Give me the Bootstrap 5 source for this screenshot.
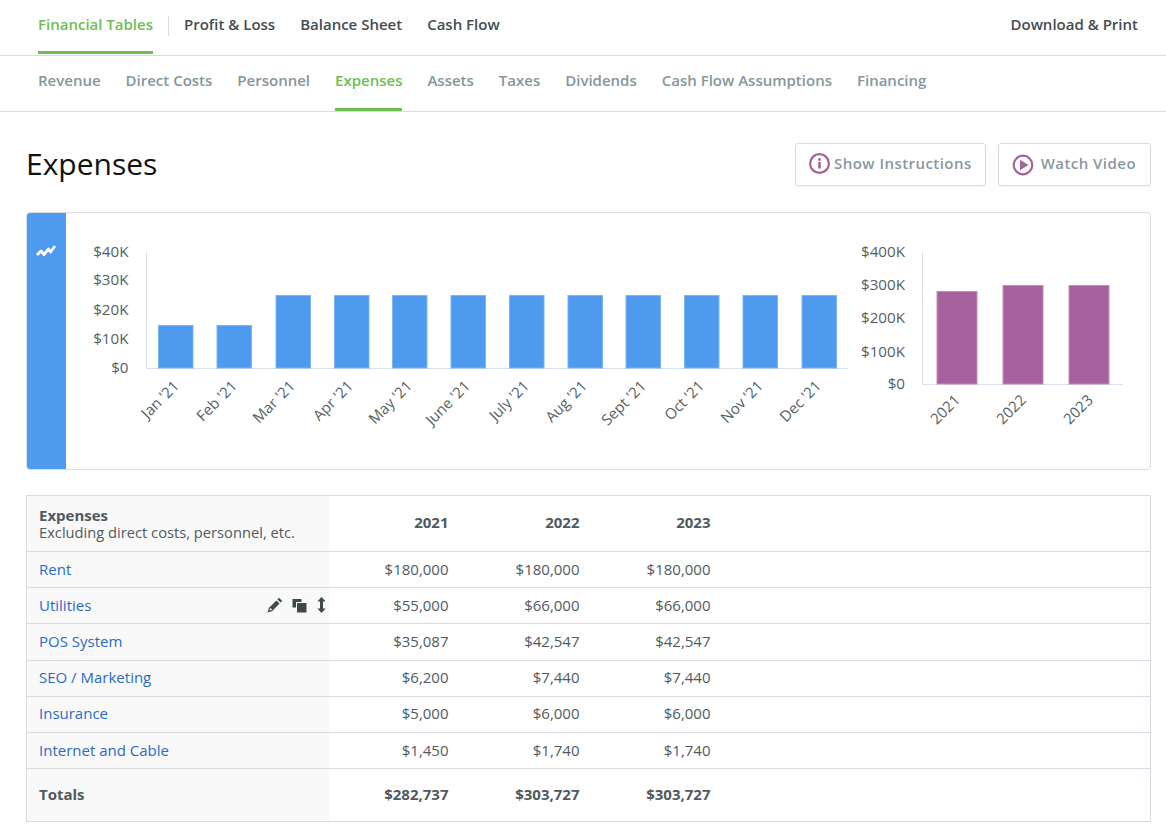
<!DOCTYPE html>
<html lang="en">
<head>
<meta charset="utf-8">
<title>Expenses</title>
<link href="https://cdn.jsdelivr.net/npm/bootstrap@5.3.0/dist/css/bootstrap.min.css" rel="stylesheet">
<style>
body{font-family:"Open Sans",sans-serif;font-size:15px;color:#505a5e;background:#fff}
.topbar{height:56px;border-bottom:1px solid #d9dcdf;padding:0 28px 0 38px}
.subbar{height:56px;border-bottom:1px solid #d9dcdf;padding:0 38px;column-gap:25px}
.tgroup{column-gap:25px}
.tlink{display:flex;align-items:center;height:100%;color:#434d50;font-weight:600;font-size:15px;text-decoration:none;border-bottom:3px solid transparent}
.subbar .tlink{color:#85969c;padding-bottom:4px}
.tlink.on{color:#6cbf50;border-bottom-color:#6cbf50}
.topbar .tlink{height:54px;margin-bottom:1px;padding-bottom:2px}
.subbar .tlink{height:55px}
.subbar .tlink.on{color:#6cbf50}
.vsep{width:1px;height:20px;background:#d9dcdf;margin:-3px -10px 0;align-self:center}
.head-row{height:100px;padding:4px 15px 0 26px}
.ptitle{font-size:30px;font-weight:400;color:#111;margin:0;line-height:1.2}
.btnrow{column-gap:12px}
.tbtn{display:flex;align-items:center;height:43px;background:#fff;border:1px solid #d5dbe1;border-radius:3px;color:#87989f;font-weight:600;font-size:15px;letter-spacing:.45px;padding:0 13px 1px;box-shadow:0 1px 1px rgba(0,0,0,.03);text-decoration:none}
.tbtn:last-child{padding-right:14px}
.tbtn svg{margin-right:4px}
.tbtn svg.playicon{margin-right:7px;margin-top:3px}
.chart-box{margin:0 15px 25px 26px;height:258px;border:1px solid #d9dde2;border-radius:4px;overflow:hidden}
.chart-side{width:40px;background:#4d9aef;flex:none;padding-top:26px;margin:-1px 0 -1px -1px;text-align:center;border-radius:4px 0 0 4px}
.chart-svg{display:block;flex:none}
.chart-svg text{font-family:"Open Sans",sans-serif;font-size:15.2px;fill:#545f63}
.chart-svg .ticklabel text{font-size:15px}
.sheet-wrap{margin:0 15px 0 26px}
.sheet{table-layout:fixed;width:1125px;margin:0;border:1px solid #d5dbe1;color:#505a5e;font-size:15px;border-collapse:collapse}
.sheet td,.sheet th{padding:0 12px;vertical-align:middle;border-bottom:1px solid #d5dbe1;background:transparent;box-shadow:none;color:inherit;line-height:17px}
.sheet tr.datarow td{height:36.2px;padding-bottom:1px}
.sheet tr.headrow th{height:56px}
.sheet tr.headrow th.numcell{padding-bottom:2px}
.sheet tr.sumrow td{height:53px;font-weight:700;border-bottom:0;padding-bottom:1px}
.sheet .namecell{background:#f9f9f9;padding-right:0}
.sheet td.numcell,.sheet th.numcell{text-align:right;padding-right:11px}
.sheet a{color:#2a6ac6;text-decoration:none}
.subnote{font-weight:400;display:block;font-size:14.7px}
.rowtools{display:flex;align-items:center;gap:10px;padding-right:3px}
.rowtools svg:first-child{margin-right:-1px}
</style>
</head>
<body>
<nav class="topbar d-flex justify-content-between">
  <div class="d-flex tgroup">
    <a class="tlink on" href="#">Financial Tables</a>
    <span class="vsep"></span>
    <a class="tlink" href="#">Profit &amp; Loss</a>
    <a class="tlink" href="#">Balance Sheet</a>
    <a class="tlink" href="#">Cash Flow</a>
  </div>
  <a class="tlink" href="#">Download &amp; Print</a>
</nav>
<nav class="subbar d-flex">
  <a class="tlink" href="#">Revenue</a>
  <a class="tlink" href="#">Direct Costs</a>
  <a class="tlink" href="#">Personnel</a>
  <a class="tlink on" href="#">Expenses</a>
  <a class="tlink" href="#">Assets</a>
  <a class="tlink" href="#">Taxes</a>
  <a class="tlink" href="#">Dividends</a>
  <a class="tlink" href="#">Cash Flow Assumptions</a>
  <a class="tlink" href="#">Financing</a>
</nav>
<div class="head-row d-flex justify-content-between align-items-center">
  <h1 class="ptitle">Expenses</h1>
  <div class="d-flex btnrow">
    <a class="tbtn" href="#">
      <svg width="21" height="21" viewBox="0 0 21 21"><circle cx="10.5" cy="10.5" r="9.4" fill="none" stroke="#a5609d" stroke-width="2.2"/><rect x="9.2" y="9" width="2.6" height="6.5" fill="#a5609d"/><circle cx="10.5" cy="6.4" r="1.5" fill="#a5609d"/></svg>Show Instructions</a>
    <a class="tbtn" href="#">
      <svg class="playicon" width="22" height="22" viewBox="0 0 22 22"><circle cx="11" cy="11" r="9.3" fill="none" stroke="#a5609d" stroke-width="2.2"/><path d="M8 5.8 16.5 11 8 16.2Z" fill="#a5609d"/></svg>Watch Video</a>
  </div>
</div>
<div class="chart-box d-flex">
  <div class="chart-side">
    <svg width="20" height="14" viewBox="0 0 20 14"><path d="M1 11 5 7 8 10.5 12.5 5 14.5 8 19 2" fill="none" stroke="#fff" stroke-width="2.8" stroke-linejoin="round"/></svg>
  </div>
  <svg class="chart-svg" width="1084" height="256" viewBox="66 213 1084 256" role="img" aria-label="Expenses charts">
    <g text-anchor="end">
      <text x="128.5" y="257">$40K</text><text x="128.5" y="285">$30K</text><text x="128.5" y="315">$20K</text><text x="128.5" y="344">$10K</text><text x="128.5" y="373">$0</text>
      <text x="905" y="257">$400K</text><text x="905" y="290">$300K</text><text x="905" y="323">$200K</text><text x="905" y="356.5">$100K</text><text x="905" y="389">$0</text>
    </g>
    <path d="M146.5 251V368.5H848" fill="none" stroke="#dbe1e8" stroke-width="1"/>
    <path d="M922.5 251V384.5H1123" fill="none" stroke="#dbe1e8" stroke-width="1"/>
    <g fill="#4d9aef" stroke="#7db5f3" stroke-width="1">
      <rect x="158.5" y="325.5" width="34.5" height="42.5"/><rect x="217" y="325.5" width="34.5" height="42.5"/><rect x="276" y="295.5" width="34.5" height="72.5"/><rect x="334.5" y="295.5" width="34.5" height="72.5"/><rect x="392.5" y="295.5" width="34.5" height="72.5"/><rect x="451" y="295.5" width="34.5" height="72.5"/><rect x="509.5" y="295.5" width="34.5" height="72.5"/><rect x="568" y="295.5" width="34.5" height="72.5"/><rect x="626" y="295.5" width="34.5" height="72.5"/><rect x="684.5" y="295.5" width="34.5" height="72.5"/><rect x="743" y="295.5" width="34.5" height="72.5"/><rect x="802" y="295.5" width="34.5" height="72.5"/>
    </g>
    <g fill="#a5609d" stroke="#c08fba" stroke-width="1">
      <rect x="937" y="291.5" width="40" height="92.5"/><rect x="1003" y="285.5" width="40" height="98.5"/><rect x="1069" y="285.5" width="40" height="98.5"/>
    </g>
    <g class="ticklabel" text-anchor="end">
      <text transform="translate(180,387) rotate(-45)">Jan '21</text>
      <text transform="translate(238,387) rotate(-45)">Feb '21</text>
      <text transform="translate(296,387) rotate(-45)">Mar '21</text>
      <text transform="translate(354,387) rotate(-45)">Apr '21</text>
      <text transform="translate(413,387) rotate(-45)">May '21</text>
      <text transform="translate(471,387) rotate(-45)">June '21</text>
      <text transform="translate(530,387) rotate(-45)">July '21</text>
      <text transform="translate(588,387) rotate(-45)">Aug '21</text>
      <text transform="translate(647,387) rotate(-45)">Sept '21</text>
      <text transform="translate(705,387) rotate(-45)">Oct '21</text>
      <text transform="translate(764,387) rotate(-45)">Nov '21</text>
      <text transform="translate(822,387) rotate(-45)">Dec '21</text>
      <text transform="translate(961,401) rotate(-45)">2021</text>
      <text transform="translate(1027,401) rotate(-45)">2022</text>
      <text transform="translate(1094,401) rotate(-45)">2023</text>
    </g>
  </svg>
</div>
<div class="sheet-wrap">
<table class="table sheet">
  <colgroup><col style="width:302px"><col style="width:131px"><col style="width:131px"><col style="width:131px"><col></colgroup>
  <tr class="headrow"><th class="namecell">Expenses<span class="subnote">Excluding direct costs, personnel, etc.</span></th><th class="numcell">2021</th><th class="numcell">2022</th><th class="numcell">2023</th><th></th></tr>
  <tr class="datarow"><td class="namecell"><a href="#">Rent</a></td><td class="numcell">$180,000</td><td class="numcell">$180,000</td><td class="numcell">$180,000</td><td></td></tr>
  <tr class="datarow"><td class="namecell"><div class="d-flex justify-content-between align-items-center"><a href="#">Utilities</a>
    <span class="rowtools">
      <svg width="16" height="16" viewBox="0 0 16 16"><path d="M12 .8 15.2 4 13.6 5.6 10.4 2.4ZM9.4 3.4 12.6 6.6 5 14.2 .6 15.4 1.8 11ZM3 11.2 2.4 13.6 4.8 13 4.6 11.8 3.6 11.6Z" fill-rule="evenodd" fill="#3f494c"/></svg>
      <svg width="15" height="15" viewBox="0 0 15 15"><path d="M.5 1h9v3H4v5.5H.5Z" fill="#3f494c"/><rect x="5" y="5" width="9.5" height="9.5" fill="#3f494c"/></svg>
      <svg width="9" height="16" viewBox="0 0 9 16"><path d="M4.5 0 8.6 4.6H6V11.4H8.6L4.5 16 .4 11.4H3V4.6H.4Z" fill="#3f494c"/></svg>
    </span></div></td><td class="numcell">$55,000</td><td class="numcell">$66,000</td><td class="numcell">$66,000</td><td></td></tr>
  <tr class="datarow"><td class="namecell"><a href="#">POS System</a></td><td class="numcell">$35,087</td><td class="numcell">$42,547</td><td class="numcell">$42,547</td><td></td></tr>
  <tr class="datarow"><td class="namecell"><a href="#">SEO / Marketing</a></td><td class="numcell">$6,200</td><td class="numcell">$7,440</td><td class="numcell">$7,440</td><td></td></tr>
  <tr class="datarow"><td class="namecell"><a href="#">Insurance</a></td><td class="numcell">$5,000</td><td class="numcell">$6,000</td><td class="numcell">$6,000</td><td></td></tr>
  <tr class="datarow"><td class="namecell"><a href="#">Internet and Cable</a></td><td class="numcell">$1,450</td><td class="numcell">$1,740</td><td class="numcell">$1,740</td><td></td></tr>
  <tr class="sumrow"><td class="namecell">Totals</td><td class="numcell">$282,737</td><td class="numcell">$303,727</td><td class="numcell">$303,727</td><td></td></tr>
</table>
</div>
<script src="https://cdn.jsdelivr.net/npm/bootstrap@5.3.0/dist/js/bootstrap.bundle.min.js"></script>
</body>
</html>
